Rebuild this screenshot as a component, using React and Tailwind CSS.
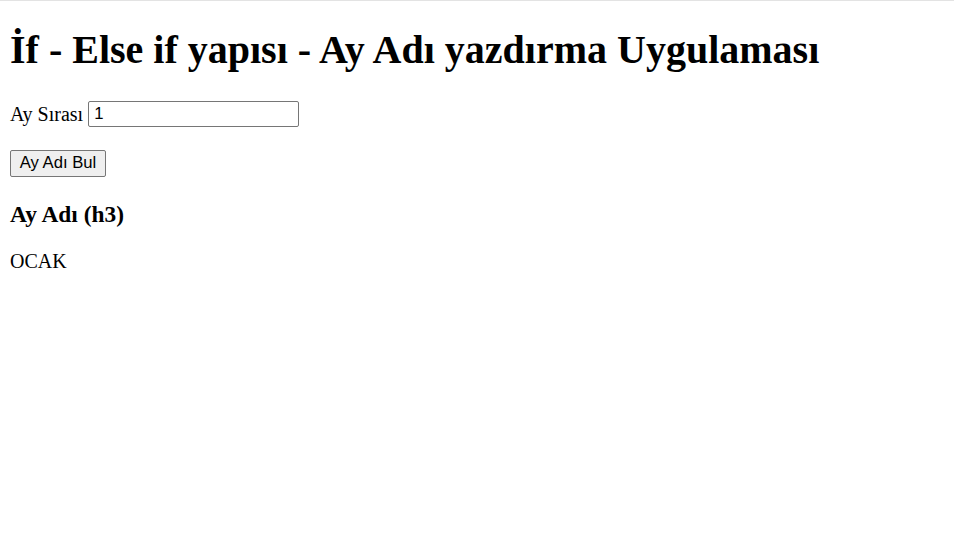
export default function App() {
  const sans = { fontFamily: '"Liberation Sans", Arial, sans-serif' };
  return (
    <div className="min-h-[549px] bg-white border-t border-[#e3e3e3] text-black" style={{ fontFamily: '"Liberation Serif", "Times New Roman", serif' }}>
      <div className="px-[10px] flex flex-col items-start">
        <h1 className="text-[40px] font-bold leading-[46px] mt-[26px]">İf - Else if yapısı - Ay Adı yazdırma Uygulaması</h1>
        <div className="mt-[28px] h-[26px] text-[20px] leading-[23px] flex items-center">
          <span>Ay Sırası</span>
          <input
            defaultValue="1"
            className="ml-[5px] w-[211px] h-[26px] border border-[#767676] rounded-[2px] pl-[5px] pr-[3px] text-[16.67px] text-black bg-white outline-none"
            style={sans}
          />
        </div>
        <button
          className="mt-[23px] h-[27px] w-[96px] border border-[#767676] rounded-[2px] bg-[#efefef] text-[16.67px] leading-none text-black"
          style={sans}
        >
          Ay Adı Bul
        </button>
        <h3 className="mt-[24px] text-[23.4px] font-bold leading-[27px]">Ay Adı (h3)</h3>
        <p className="mt-[22px] text-[20px] leading-[23px]">OCAK</p>
      </div>
    </div>
  );
}
